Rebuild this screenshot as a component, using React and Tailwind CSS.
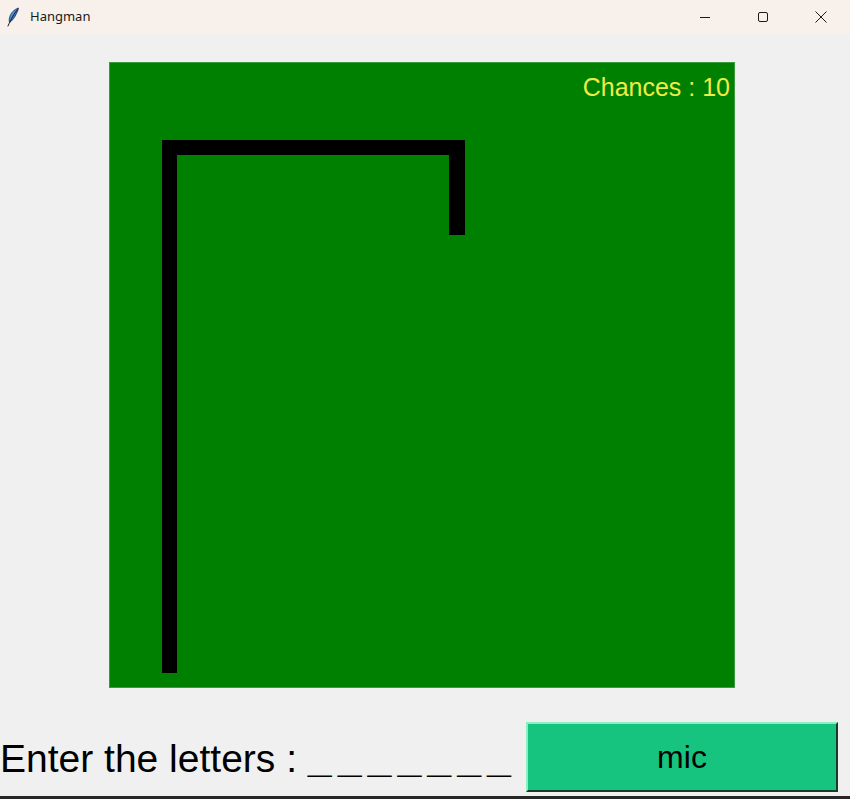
import React from 'react';

const Feather = () => (
  <svg width="14" height="20" viewBox="0 0 14 20">
    <defs>
      <linearGradient id="fg" x1="0" y1="0" x2="1" y2="1">
        <stop offset="0" stopColor="#9cc8f0" />
        <stop offset="0.5" stopColor="#3a7fd0" />
        <stop offset="1" stopColor="#1d4f9a" />
      </linearGradient>
    </defs>
    <path d="M12.5 1 C8 2.5 4.5 6 3.5 11 C3 13 3.2 14.5 3.6 15.5 C6 14 9 10 10.5 6.5 C11.5 4.5 12.3 2.5 12.5 1 Z" fill="url(#fg)" stroke="#1b2f55" strokeWidth="0.8" />
    <path d="M11.5 2.5 C8 7 5.5 11 2 19" fill="none" stroke="#1a1a1a" strokeWidth="1" strokeLinecap="round" />
  </svg>
);

function TitleBar() {
  return (
    <div className="h-[34px] bg-[#f7f0eb] flex items-center shrink-0">
      <div className="w-[24px] flex justify-center pl-[2px]">
        <Feather />
      </div>
      <span className="ml-[6px] text-[13px] text-[#1a1a1a]" style={{ fontFamily: '"Segoe UI", "Noto Sans", sans-serif' }}>
        Hangman
      </span>
      <div className="ml-auto flex items-center h-full">
        {/* minimize */}
        <div className="w-[58px] h-full flex items-center justify-center">
          <div className="w-[10px] h-px bg-[#1a1a1a]" />
        </div>
        {/* maximize */}
        <div className="w-[58px] h-full flex items-center justify-center">
          <div className="w-[10px] h-[10px] border border-[#1a1a1a] rounded-[2px]" />
        </div>
        {/* close */}
        <div className="w-[58px] h-full flex items-center justify-center">
          <svg width="12" height="12" viewBox="0 0 12 12">
            <path d="M0.5 0.5 L11.5 11.5 M11.5 0.5 L0.5 11.5" stroke="#1a1a1a" strokeWidth="1" />
          </svg>
        </div>
      </div>
    </div>
  );
}

function Board({ chances }) {
  return (
    <div className="relative w-[626px] h-[626px] bg-[#008000] border border-[#3d9a3d]">
      <span
        className="absolute right-[4px] top-[12px] text-[25px] leading-none text-[#eded48]"
        style={{ fontFamily: '"Liberation Sans", Arial, sans-serif' }}
      >
        Chances : {chances}
      </span>
      {/* gallows */}
      <div className="absolute left-[52px] top-[77px] w-[15px] h-[533px] bg-black" />
      <div className="absolute left-[52px] top-[77px] w-[303px] h-[15px] bg-black" />
      <div className="absolute left-[339px] top-[77px] w-[16px] h-[95px] bg-black" />
    </div>
  );
}

export default function App() {
  const word = '_ _ _ _ _ _ _';
  return (
    <div className="w-[850px] h-[799px] bg-[#f0f0f0] flex flex-col overflow-hidden" style={{ fontFamily: '"Liberation Sans", Arial, sans-serif' }}>
      <TitleBar />
      <div className="pl-[109px] pt-[28px]">
        <Board chances={10} />
      </div>
      <div className="flex items-start mt-[34px] h-[70px]">
        <div className="w-[526px] shrink-0 mt-[14px] text-[39px] leading-none text-black whitespace-nowrap">
          Enter the letters :{' '}
          <span className="text-[43px] font-bold [word-spacing:-6px]">{word}</span>
        </div>
        <button className="w-[312px] h-[70px] bg-[#17c47f] border-t-2 border-l-2 border-b-2 border-r-2 border-t-[#8af0c0] border-l-[#8af0c0] border-b-[#1c3a2c] border-r-[#1c3a2c] flex items-center justify-center text-[32px] leading-none text-black">
          mic
        </button>
      </div>
      <div className="mt-auto h-[3px] bg-[#262626]" />
    </div>
  );
}
